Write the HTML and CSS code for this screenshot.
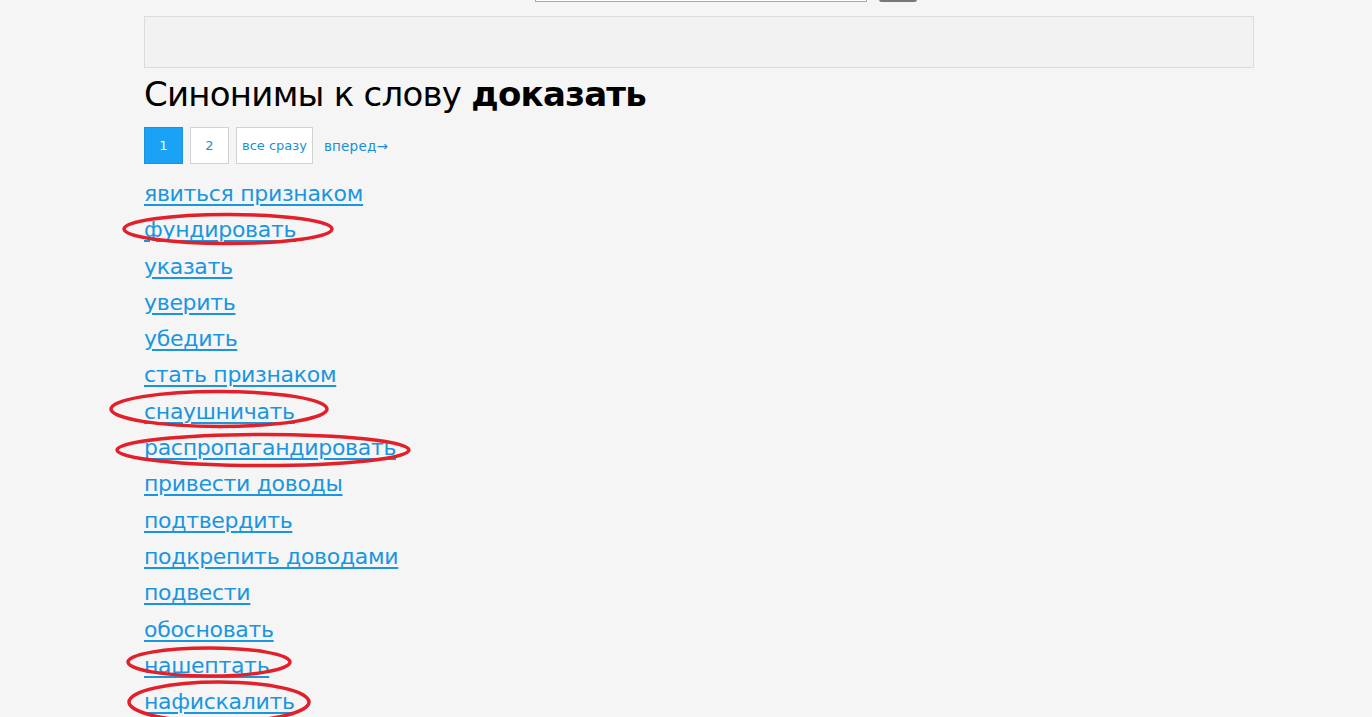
FILE: index.html
```html
<!DOCTYPE html>
<html lang="ru">
<head>
<meta charset="utf-8">
<title>Синонимы к слову доказать</title>
<link rel="stylesheet" href="styles.css">
</head>
<body>
<div class="topbar">
  <div class="search-input"></div>
  <div class="search-btn"></div>
</div>
<div class="container">
  <div class="banner"></div>
  <h1 class="title">Синонимы к слову <b>доказать</b></h1>
  <div class="pager">
    <span class="page active">1</span>
    <a class="page" href="#">2</a>
    <a class="page" href="#">все сразу</a>
    <a class="next" href="#">вперед→</a>
  </div>
  <ul class="words">
    <li><a href="#">явиться признаком</a></li>
    <li><a href="#">фундировать</a></li>
    <li><a href="#">указать</a></li>
    <li><a href="#">уверить</a></li>
    <li><a href="#">убедить</a></li>
    <li><a href="#">стать признаком</a></li>
    <li><a href="#">снаушничать</a></li>
    <li><a href="#">распропагандировать</a></li>
    <li><a href="#">привести доводы</a></li>
    <li><a href="#">подтвердить</a></li>
    <li><a href="#">подкрепить доводами</a></li>
    <li><a href="#">подвести</a></li>
    <li><a href="#">обосновать</a></li>
    <li><a href="#">нашептать</a></li>
    <li><a href="#">нафискалить</a></li>
  </ul>
</div>
<svg class="marks" width="1372" height="717" viewBox="0 0 1372 717">
  <g fill="none" stroke="#e3202a" stroke-width="3.5">
    <ellipse cx="228" cy="229" rx="104" ry="14.5"/>
    <ellipse cx="219" cy="409" rx="108" ry="17.5"/>
    <ellipse cx="263" cy="450" rx="146" ry="15.5"/>
    <ellipse cx="209" cy="662" rx="81" ry="14"/>
    <ellipse cx="219" cy="702" rx="90" ry="20"/>
  </g>
</svg>
</body>
</html>
```
FILE: styles.css
```css
html, body {
  margin: 0;
  padding: 0;
}
body {
  background: #f5f5f5;
  font-family: "DejaVu Sans", Verdana, sans-serif;
  color: #000;
  height: 717px;
  overflow: hidden;
  position: relative;
}
.topbar {
  height: 2px;
  display: flex;
  align-items: flex-end;
  padding-left: 535px;
  gap: 12px;
  overflow: hidden;
}
.search-input {
  width: 332px;
  height: 20px;
  border: 1px solid #a8a8a8;
  background: #fff;
  box-sizing: border-box;
}
.search-btn {
  width: 38px;
  height: 20px;
  background: #777;
  border-radius: 3px;
  box-shadow: 0 1px 1px #ccc;
}
.container {
  width: 1110px;
  margin: 14px 0 0 144px;
}
.banner {
  height: 50px;
  border: 1px solid #dcdcdc;
  background: #f2f2f2;
}
.title {
  font-weight: normal;
  font-size: 34px;
  line-height: 40px;
  margin: 6px 0 0 0;
  letter-spacing: -0.75px;
}
.title b {
  font-weight: bold;
}
.pager {
  display: flex;
  align-items: center;
  margin-top: 13px;
  font-size: 13px;
}
.page {
  height: 37px;
  min-width: 39px;
  box-sizing: border-box;
  border: 1px solid #d2d2d2;
  background: #fff;
  color: #1a8fd6;
  text-decoration: none;
  display: flex;
  align-items: center;
  justify-content: center;
  padding: 0 5px;
  margin-right: 7px;
}
.page.active {
  background: #1aa3f5;
  border-color: #1b92dc;
  color: #fff;
}
.next {
  color: #1a8fd6;
  text-decoration: none;
  margin-left: 4px;
  font-size: 13.5px;
  letter-spacing: 0.2px;
}
.words {
  list-style: none;
  margin: 12px 0 0 0;
  padding: 0;
}
.words li {
  font-size: 22px;
  line-height: 36.3px;
  letter-spacing: -0.3px;
}
.words a {
  color: #1a96e0;
  text-decoration: underline;
  text-underline-offset: 3px;
  text-decoration-thickness: 2px;
}
.marks {
  position: absolute;
  left: 0;
  top: 0;
  pointer-events: none;
}
```
